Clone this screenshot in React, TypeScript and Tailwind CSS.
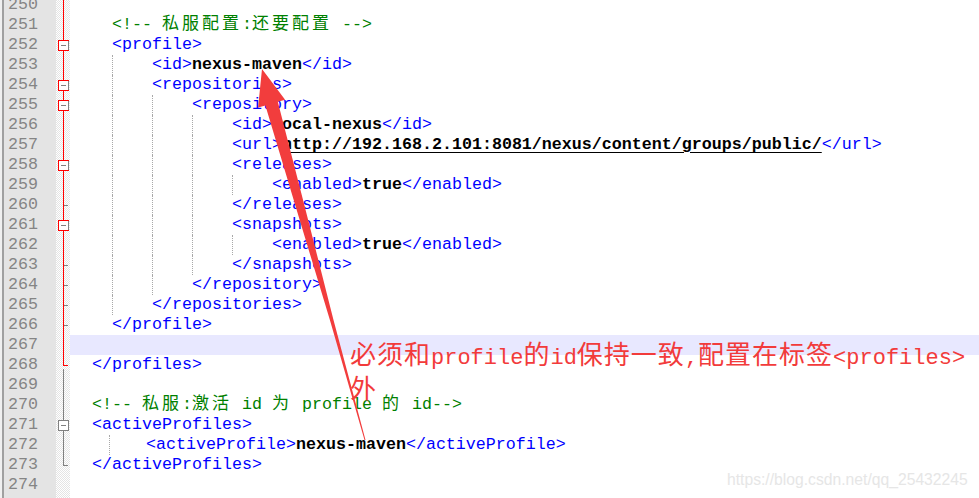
const GUIDE = "border-l border-dotted border-[#a8a8a8]";
const I = "w-10";
const IG = `w-10 ${GUIDE}`;

type Kind = "t" | "c" | "b" | "u";
type Tok = [string, Kind];
type Fold = "r" | "rb" | "rt" | "rend" | "g" | "gb" | "gend" | "";
type Row = { n: number; ind: string[]; toks: Tok[]; fold: Fold; hl?: boolean };

const kindCls: Record<Kind, string> = {
  t: "text-[#0000ff]",
  c: "text-[#008000]",
  b: "font-bold text-black",
  u: "font-bold text-black underline underline-offset-[3px]",
};

const rows: Row[] = [
  { n: 250, ind: [], toks: [], fold: "r" },
  { n: 251, ind: [I], toks: [["<!-- 私服配置:还要配置 -->", "c"]], fold: "r" },
  { n: 252, ind: [I], toks: [["<profile>", "t"]], fold: "rb" },
  { n: 253, ind: [I, IG], toks: [["<id>", "t"], ["nexus-maven", "b"], ["</id>", "t"]], fold: "r" },
  { n: 254, ind: [I, IG], toks: [["<repositories>", "t"]], fold: "rb" },
  { n: 255, ind: [I, IG, IG], toks: [["<repository>", "t"]], fold: "rb" },
  { n: 256, ind: [I, IG, IG, IG], toks: [["<id>", "t"], ["local-nexus", "b"], ["</id>", "t"]], fold: "r" },
  {
    n: 257,
    ind: [I, IG, IG, IG],
    toks: [["<url>", "t"], ["http://192.168.2.101:8081/nexus/content/groups/public/", "u"], ["</url>", "t"]],
    fold: "r",
  },
  { n: 258, ind: [I, IG, IG, IG], toks: [["<releases>", "t"]], fold: "rb" },
  { n: 259, ind: [I, IG, IG, IG, IG], toks: [["<enabled>", "t"], ["true", "b"], ["</enabled>", "t"]], fold: "r" },
  { n: 260, ind: [I, IG, IG, IG], toks: [["</releases>", "t"]], fold: "rt" },
  { n: 261, ind: [I, IG, IG, IG], toks: [["<snapshots>", "t"]], fold: "rb" },
  { n: 262, ind: [I, IG, IG, IG, IG], toks: [["<enabled>", "t"], ["true", "b"], ["</enabled>", "t"]], fold: "r" },
  { n: 263, ind: [I, IG, IG, IG], toks: [["</snapshots>", "t"]], fold: "rt" },
  { n: 264, ind: [I, IG, IG], toks: [["</repository>", "t"]], fold: "rt" },
  { n: 265, ind: [I, IG], toks: [["</repositories>", "t"]], fold: "rt" },
  { n: 266, ind: [I], toks: [["</profile>", "t"]], fold: "rt" },
  { n: 267, ind: [], toks: [], fold: "r", hl: true },
  { n: 268, ind: ["w-5"], toks: [["</profiles>", "t"]], fold: "rend" },
  { n: 269, ind: [], toks: [], fold: "g" },
  { n: 270, ind: ["w-5"], toks: [["<!-- 私服:激活 id 为 profile 的 id-->", "c"]], fold: "g" },
  { n: 271, ind: ["w-5"], toks: [["<activeProfiles>", "t"]], fold: "gb" },
  {
    n: 272,
    ind: ["w-[37px]", `w-[37px] ${GUIDE}`],
    toks: [["<activeProfile>", "t"], ["nexus-maven", "b"], ["</activeProfile>", "t"]],
    fold: "g",
  },
  { n: 273, ind: ["w-5"], toks: [["</activeProfiles>", "t"]], fold: "gend" },
  { n: 274, ind: [], toks: [], fold: "" },
  { n: 275, ind: [], toks: [], fold: "" },
];

// CJK glyphs take two cells in the editor
function withCjk(text: string) {
  return text.split(/([\u4e00-\u9fff]+)/).map((part, i) =>
    /[\u4e00-\u9fff]/.test(part) ? (
      <span key={i} className="text-[17px] tracking-[3px]">
        {part}
      </span>
    ) : (
      part
    )
  );
}

function FoldMark({ kind }: { kind: Fold }) {
  const R = "#ff0000";
  const G = "#808080";
  const line = kind.startsWith("r") ? R : G;
  return (
    <svg width="14" height="20" viewBox="0 0 14 20" shapeRendering="crispEdges" className="block">
      {(kind === "r" || kind === "g" || kind === "rt") && <rect x="7" y="0" width="1" height="20" fill={line} />}
      {kind === "rt" && <rect x="8" y="10" width="4" height="1" fill={G} />}
      {(kind === "rb" || kind === "gb") && (
        <>
          <rect x="7" y="0" width="1" height="5" fill={line} />
          <rect x="7" y="16" width="1" height="4" fill={line} />
          <rect x="2.5" y="5.5" width="10" height="10" fill="#fff" stroke={G} />
          {kind === "rb" && <path d="M12.5 5.5H2.5V15.5H12.5" fill="none" stroke={R} />}
          <rect x="5" y="10" width="5" height="1" fill={G} />
        </>
      )}
      {kind === "rend" && (
        <>
          <rect x="7" y="0" width="1" height="11" fill={R} />
          <rect x="8" y="10" width="4" height="1" fill={R} />
          <rect x="7" y="14" width="1" height="6" fill={G} />
        </>
      )}
      {kind === "gend" && (
        <>
          <rect x="7" y="0" width="1" height="11" fill={G} />
          <rect x="8" y="10" width="4" height="1" fill={G} />
        </>
      )}
    </svg>
  );
}

function CodeRow({ row }: { row: Row }) {
  return (
    <div className="flex h-5">
      <div className="w-[2px] bg-[#f0f0f0]" />
      <div className="w-[2px] bg-[#a0a0a0]" />
      <div className="w-[52px] bg-[#e4e4e4] pr-[18px] text-right leading-5 text-[#858585]">{row.n}</div>
      <div className="w-[14px] bg-[image:repeating-conic-gradient(#e4e4e4_0_25%,#ffffff_0_50%)] bg-size-[2px_2px]">
        <FoldMark kind={row.fold} />
      </div>
      <div className={`flex flex-1 pl-[2px] leading-5 whitespace-pre ${row.hl ? "bg-[#e8e8ff]" : ""}`}>
        {row.ind.map((c, i) => (
          <span key={i} className={`h-5 shrink-0 ${c}`} />
        ))}
        <span>
          {row.toks.map(([text, k], i) => (
            <span key={i} className={kindCls[k]}>
              {k === "c" ? withCjk(text) : text}
            </span>
          ))}
        </span>
      </div>
    </div>
  );
}

function Note() {
  const cjk = "text-[26px] tracking-[1px]";
  return (
    <div className="absolute left-[350px] top-[341px] text-[22px] leading-[33px] whitespace-pre text-[#f23b3b]">
      <span className={cjk}>必须和</span>profile<span className={cjk}>的</span>id
      <span className={cjk}>保持一致</span>,<span className={cjk}>配置在标签</span>&lt;profiles&gt;
      <br />
      <span className={cjk}>外</span>
    </div>
  );
}

export default function App() {
  return (
    <div className="relative h-[498px] w-[979px] overflow-hidden bg-white font-[family-name:'Liberation_Mono','Noto_Sans_CJK_SC',monospace] text-[16.67px]">
      <div className="-mt-[5px]">
        {rows.map((r) => (
          <CodeRow key={r.n} row={r} />
        ))}
      </div>

      <svg className="pointer-events-none absolute inset-0" width="979" height="498" viewBox="0 0 979 498">
        <polygon
          fill="#f23d3d"
          points="262,69 285.1,99.8 277.8,101.8 299.2,185 310.7,230 333.5,320 353.5,395 365.5,440 364.5,440 351.5,395 329.9,320 302.7,230 289.2,185 265.4,105.4 258.1,107.5"
        />
      </svg>

      <Note />

      <div className="absolute left-[727px] top-[471px] font-[family-name:'Liberation_Sans',Arial,sans-serif] text-[15.7px] leading-[18px] text-[#e6e6e6]">
        https://blog.csdn.net/qq_25432245
      </div>
    </div>
  );
}
